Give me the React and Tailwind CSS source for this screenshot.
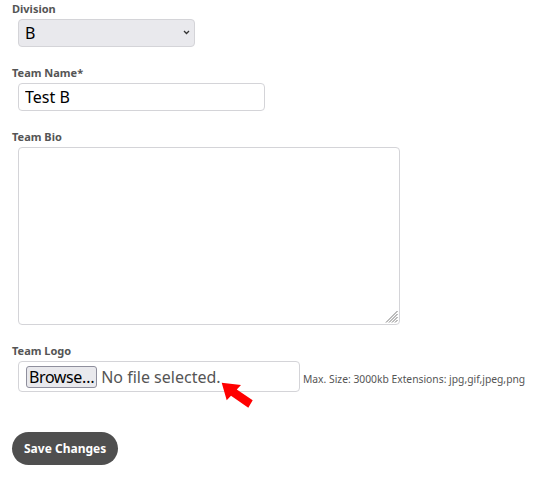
import { useState } from 'react';

const labelClass = 'block text-[11px] leading-[14px] font-bold text-[#555] mb-[3px]';

function ResizeGrip() {
  return (
    <svg
      className="pointer-events-none absolute right-[2px] bottom-[2px]"
      width="13"
      height="13"
      viewBox="0 0 13 13"
    >
      <g stroke="#7a7a7a" strokeWidth="1">
        <line x1="1" y1="12.5" x2="12.5" y2="1" />
        <line x1="4" y1="12.5" x2="12.5" y2="4" />
        <line x1="7" y1="12.5" x2="12.5" y2="7" />
        <line x1="10" y1="12.5" x2="12.5" y2="10" />
      </g>
    </svg>
  );
}

function PointerArrow() {
  return (
    <svg
      className="pointer-events-none absolute left-[200px] top-[18px]"
      width="38"
      height="32"
      viewBox="0 0 38 32"
    >
      <polygon
        points="3.7,3.7 23,6 18.8,10.6 34.7,21.3 30.3,28.7 13,16.8 8.7,21.3"
        fill="#ff0000"
      />
    </svg>
  );
}

export default function App() {
  const [division, setDivision] = useState('B');
  const [name, setName] = useState('Test B');
  const [bio, setBio] = useState('');

  return (
    <div className="min-h-[488px] bg-white px-3 pt-[2px] font-['Noto_Sans',sans-serif] text-[#222]">
      <form onSubmit={(e) => e.preventDefault()}>
        {/* Division */}
        <div>
          <label className={labelClass}>Division</label>
          <div className="relative ml-1.5 w-[177px]">
            <select
              value={division}
              onChange={(e) => setDivision(e.target.value)}
              className="block h-[28px] w-full appearance-none rounded-[4px] border border-[#d4d4d8] bg-[#e9e9ed] pl-[6px] text-[16px] leading-none text-black outline-none"
            >
              <option value="A">A</option>
              <option value="B">B</option>
              <option value="C">C</option>
            </select>
            <svg
              className="pointer-events-none absolute right-[5px] top-[11px]"
              width="7"
              height="5"
              viewBox="0 0 7 5"
            >
              <path d="M1 1l2.5 2.5L6 1" fill="none" stroke="#333" strokeWidth="1.3" />
            </svg>
          </div>
        </div>

        {/* Team Name */}
        <div className="mt-[19px]">
          <label className={labelClass}>Team Name*</label>
          <input
            type="text"
            value={name}
            onChange={(e) => setName(e.target.value)}
            className="ml-1.5 block h-[28px] w-[247px] rounded-[4px] border border-[#d4d4d8] bg-white px-[6px] text-[16px] text-black outline-none"
          />
        </div>

        {/* Team Bio */}
        <div className="mt-[19px]">
          <label className={labelClass}>Team Bio</label>
          <div className="relative ml-1.5 w-[382px]">
            <textarea
              value={bio}
              onChange={(e) => setBio(e.target.value)}
              className="block h-[178px] w-full resize-none rounded-[4px] border border-[#d4d4d8] bg-white px-[7px] py-1 text-[16px] outline-none"
            />
            <ResizeGrip />
          </div>
        </div>

        {/* Team Logo */}
        <div className="mt-[19px]">
          <label className={labelClass}>Team Logo</label>
          <div className="relative ml-1.5 flex items-center">
            <label className="flex h-[31px] w-[282px] cursor-pointer items-center rounded-[4px] border border-[#d4d4d8] bg-white pl-[7px]">
              <input type="file" accept="image/*" className="hidden" />
              <span className="flex h-[22px] items-center rounded-[3px] border border-[#8f8f9d] bg-[#e9e9ed] px-[2px] text-[16px] leading-none tracking-[-0.4px] text-black">
                Browse…
              </span>
              <span className="ml-[4px] text-[16px] leading-none text-[#555]">
                No file selected.
              </span>
            </label>
            <span className="ml-[3px] pt-[6px] text-[10.3px] text-[#555]">
              Max. Size: 3000kb Extensions: jpg,gif,jpeg,png
            </span>
            <PointerArrow />
          </div>
        </div>

        <button
          type="submit"
          className="mt-[40px] h-[33px] rounded-full bg-[#4f4f4f] px-3 text-[12px] font-bold text-white"
        >
          Save Changes
        </button>
      </form>
    </div>
  );
}
